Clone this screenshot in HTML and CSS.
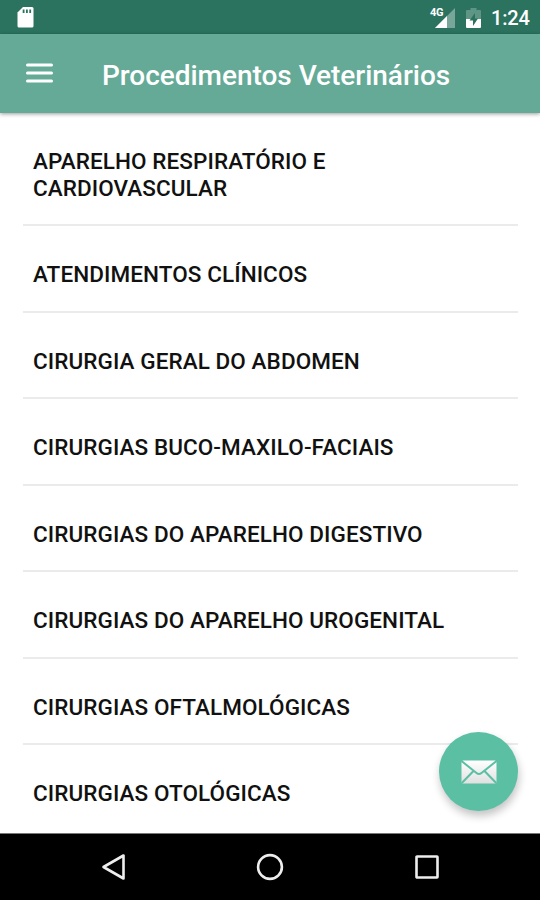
FILE: index.html
```html
<!DOCTYPE html>
<html lang="pt-BR">
<head>
<meta charset="utf-8">
<title>Procedimentos Veterinários</title>
<link rel="stylesheet" href="styles.css">
</head>
<body>
<div class="phone">
  <div class="status">
    <svg class="sd" width="17" height="21" viewBox="0 0 17 21"><path fill="#fff" d="M6 0H15Q16.500 0 16.500 1.500V19Q16.500 20.500 15 20.500H2Q.5 20.500 .5 19V5.500Z"/><path fill="#2b735f" d="M5.700 2.500h1.800v3.500H5.700zM9 2.500h1.800v3.500H9zM12.300 2.500h1.800v3.500h-1.800z"/></svg>
    <span class="network">4G</span>
    <svg class="signal" width="20" height="20" viewBox="0 0 20 20"><path fill="#78a79a" d="M20 0V20H0Z"/><path fill="#fff" d="M12 8V20H0Z"/></svg>
    <svg class="battery" width="15" height="20" viewBox="0 0 15 20"><path fill="#5f9585" d="M4.500 0h6v2H14q1 0 1 1v8H0V3q0-1 1-1h3.500z"/><path fill="#fff" d="M0 11h15v8q0 1-1 1H1q-1 0-1-1z"/><path fill="#2b735f" d="M9 5 3.500 12.500H7V18l5-7.500H9z"/></svg>
    <span class="clock">1:24</span>
  </div>
  <header class="bar">
    <svg class="menu" width="27" height="20" viewBox="0 0 27 20"><path stroke="#fff" stroke-width="3" stroke-linecap="round" d="M1.500 2H25.500M1.500 10H25.500M1.500 18H25.500"/></svg>
    <h1 class="title">Procedimentos Veterinários</h1>
  </header>
  <main class="content">
    <ul class="list">
      <li class="row first">APARELHO RESPIRATÓRIO E<br>CARDIOVASCULAR</li>
      <li class="row">ATENDIMENTOS CLÍNICOS</li>
      <li class="row">CIRURGIA GERAL DO ABDOMEN</li>
      <li class="row">CIRURGIAS BUCO-MAXILO-FACIAIS</li>
      <li class="row">CIRURGIAS DO APARELHO DIGESTIVO</li>
      <li class="row">CIRURGIAS DO APARELHO UROGENITAL</li>
      <li class="row">CIRURGIAS OFTALMOLÓGICAS</li>
      <li class="row">CIRURGIAS OTOLÓGICAS</li>
    </ul>
    <button class="fab" aria-label="E-mail">
      <svg width="36" height="24" viewBox="0 0 36 24"><defs><linearGradient id="g" x1="0" y1="0" x2="0" y2="1"><stop offset="0" stop-color="#fff"/><stop offset="1" stop-color="#e0e0e0"/></linearGradient></defs><rect x=".5" y=".5" width="35" height="23" rx="1.500" fill="url(#g)"/><path fill="none" stroke="#5bbfa3" stroke-width="2" d="M.5 1 15.500 13Q18 15 20.500 13L35.500 1M.8 23 12.500 11M35.200 23 23.500 11"/></svg>
    </button>
  </main>
  <nav class="nav">
    <svg width="26" height="30" viewBox="0 0 26 30"><path fill="none" stroke="#eee" stroke-width="2.600" stroke-linejoin="round" d="M23.500 3.500V26.500L3.500 15Z"/></svg>
    <svg width="30" height="30" viewBox="0 0 30 30"><circle cx="15" cy="15" r="11.900" fill="none" stroke="#eee" stroke-width="2.600"/></svg>
    <svg width="26" height="30" viewBox="0 0 26 30"><rect x="2.500" y="4.500" width="21" height="21" rx=".5" fill="none" stroke="#eee" stroke-width="2.600"/></svg>
  </nav>
</div>
</body>
</html>
```
FILE: styles.css
```css
* { box-sizing: border-box; }
body { margin: 0; font-family: Roboto, "Liberation Sans", sans-serif; }
.phone { width: 540px; height: 900px; display: flex; flex-direction: column; overflow: hidden; background: #fff; }
.status { flex: none; height: 34px; background: #2b735f; color: #fff; display: flex; align-items: flex-start; padding: 7px 11px 0 17px; }
.network { margin-left: auto; font-size: 11px; line-height: 12px; font-weight: 700; letter-spacing: -.4px; width: 13px; margin-right: -8px; white-space: nowrap; z-index: 1; }
.signal { margin-top: 1px; }
.battery { margin-left: 11px; margin-top: 1px; }
.clock { margin-left: 10px; width: 38px; font-size: 20px; line-height: 23px; font-weight: 500; letter-spacing: -.2px; white-space: nowrap; }
.bar { flex: none; height: 79px; background: #65aa97; display: flex; align-items: center; padding-left: 26px; box-shadow: 0 1px 4px rgba(0,0,0,.4); z-index: 1; }
.menu { margin-bottom: 1px; }
.title { margin: 3px 0 0 49px; color: #fff; font-size: 28px; letter-spacing: -.03px; font-weight: 500; white-space: nowrap; }
.content { flex: 1; min-height: 0; position: relative; overflow: hidden; }
.list { list-style: none; margin: 0; padding: 0 22px 0 23px; }
.row { height: 86.500px; border-bottom: 2px solid #ebebeb; padding: 35px 10px 0; font-size: 22.500px; line-height: 26.500px; letter-spacing: .08px; font-weight: 500; color: #111; white-space: nowrap; }
.first { height: 113px; }
.row:last-child { border-bottom: 0; }
.fab { position: absolute; right: 22px; bottom: 22px; width: 79px; height: 79px; border: 0; padding: 0; border-radius: 50%; background: #5bbfa3; display: flex; align-items: center; justify-content: center; box-shadow: 1px 5px 9px rgba(0,0,0,.24); }
.nav { flex: none; height: 67px; background: #000; border-top: 1px solid #777; display: flex; align-items: center; justify-content: space-between; padding: 0 100px; }
```
